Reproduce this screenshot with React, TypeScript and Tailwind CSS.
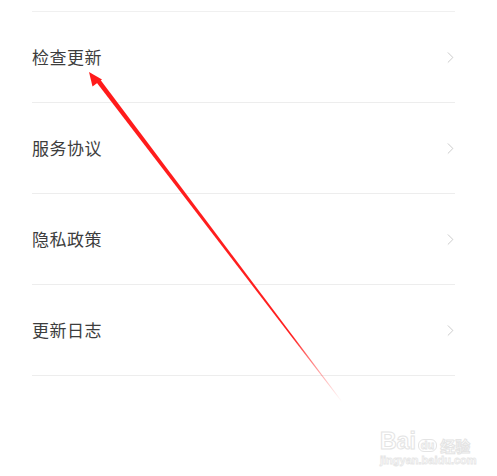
import { ChevronRight } from "lucide-react";

const items = ["检查更新", "服务协议", "隐私政策", "更新日志"];

function Arrow() {
  // tapered red arrow pointing at the first row
  return (
    <svg className="absolute inset-0 pointer-events-none" width="497" height="476" viewBox="0 0 497 476">
      <defs>
        <linearGradient id="fade" x1="90" y1="73" x2="342" y2="402" gradientUnits="userSpaceOnUse">
          <stop offset="0" stopColor="#ff1a1a" />
          <stop offset="0.8" stopColor="#ff2020" />
          <stop offset="1" stopColor="#ff4040" stopOpacity="0" />
        </linearGradient>
      </defs>
      <polygon points="96.4,82.2 100.2,79.4 342.2,401.6 341.6,402" fill="url(#fade)" />
      <polygon points="89,72 102,79.5 92.5,86.5" fill="#ff1a1a" />
    </svg>
  );
}

export default function App() {
  return (
    <div className="relative w-[497px] h-[476px] bg-white overflow-hidden font-['Noto_Sans_CJK_SC',sans-serif]">
      <div className="ml-[32px] mr-[42px] mt-[11px] border-t border-[#f0f0f0]">
        {items.map((label) => (
          <div key={label} className="h-[91px] border-b border-[#ededed] flex items-center justify-between">
            <span className="text-[17px] text-[#3d3d3d] tracking-[0.5px]">{label}</span>
            <ChevronRight size={19} strokeWidth={1.1} className="text-[#c4c4c4] -mr-[5px]" />
          </div>
        ))}
      </div>

      {/* watermark */}
      <div className="absolute left-[380px] top-[428px] w-[92px] flex flex-col select-none">
        <div className="flex items-end h-[25px] leading-none">
          <span className="text-[23px] font-bold text-transparent [-webkit-text-stroke:1px_#e4e4e4] font-['Liberation_Sans',sans-serif]">Bai</span>
          <span className="ml-[2px] mb-[1px] px-[2px] rounded-[6px] border border-[#e4e4e4] text-[11px] font-bold text-transparent [-webkit-text-stroke:0.8px_#e4e4e4] font-['Liberation_Sans',sans-serif]">du</span>
          <span className="ml-[3px] text-[15px] font-bold text-transparent [-webkit-text-stroke:1px_#e4e4e4]">经验</span>
        </div>
        <span className="mt-[2px] text-[11px] font-bold text-transparent [-webkit-text-stroke:0.8px_#e6e6e6] font-['Liberation_Sans',sans-serif] leading-none">jingyan.baidu.com</span>
      </div>

      <Arrow />
    </div>
  );
}
